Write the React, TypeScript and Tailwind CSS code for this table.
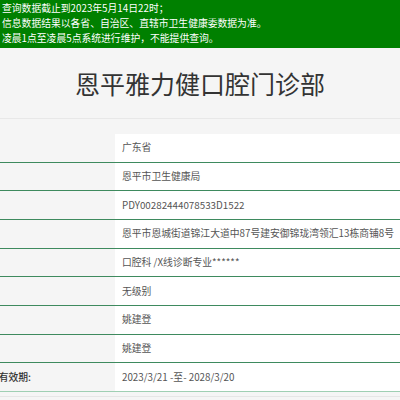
import React from "react";

const rows: { label: string; value: string }[] = [
  { label: "", value: "广东省" },
  { label: "", value: "恩平市卫生健康局" },
  { label: "", value: "PDY00282444078533D1522" },
  { label: "", value: "恩平市恩城街道锦江大道中87号建安御锦珑湾领汇13栋商铺8号" },
  { label: "", value: "口腔科 /X线诊断专业******" },
  { label: "", value: "无级别" },
  { label: "", value: "姚建登" },
  { label: "", value: "姚建登" },
  { label: "许可证有效期:", value: "2023/3/21 -至- 2028/3/20" },
];

export default function App() {
  return (
    <div
      className="w-[400px] h-[400px] overflow-hidden bg-[#f5f5f5]"
      style={{ fontFamily: '"Noto Sans CJK SC", "Noto Sans", sans-serif' }}
    >
      <div className="h-[48px] bg-[#008000] px-[2px] pt-px text-[9.8px] leading-[15px] text-white whitespace-nowrap">
        <div>查询数据截止到2023年5月14日22时；</div>
        <div>信息数据结果以各省、自治区、直辖市卫生健康委数据为准。</div>
        <div>凌晨1点至凌晨5点系统进行维护，不能提供查询。</div>
      </div>

      <div className="h-[71px] flex items-center justify-center border-b border-[#e8e8e8] text-[25px] text-[#333] pt-px">
        恩平雅力健口腔门诊部
      </div>

      <div className="h-[15px]"></div>

      <div>
        {rows.map((r, i) => (
          <div
            key={i}
            className={
              "flex h-[28.67px] border-b " +
              (i === rows.length - 1 ? "border-[#9fcfb3]" : "border-[#3e8a5e]")
            }
          >
            <div className="w-[115px] shrink-0 flex items-center justify-end pr-[84px] whitespace-nowrap text-[9.8px] text-[#333] font-medium">
              {r.label}
            </div>
            <div className="flex-1 bg-white flex items-center pl-[7px] whitespace-nowrap text-[9.8px] text-[#555]">
              {r.value}
            </div>
          </div>
        ))}
      </div>
      <div className="h-[4px]"></div>
      <div className="border-t border-[#e6e6e6]"></div>
    </div>
  );
}
